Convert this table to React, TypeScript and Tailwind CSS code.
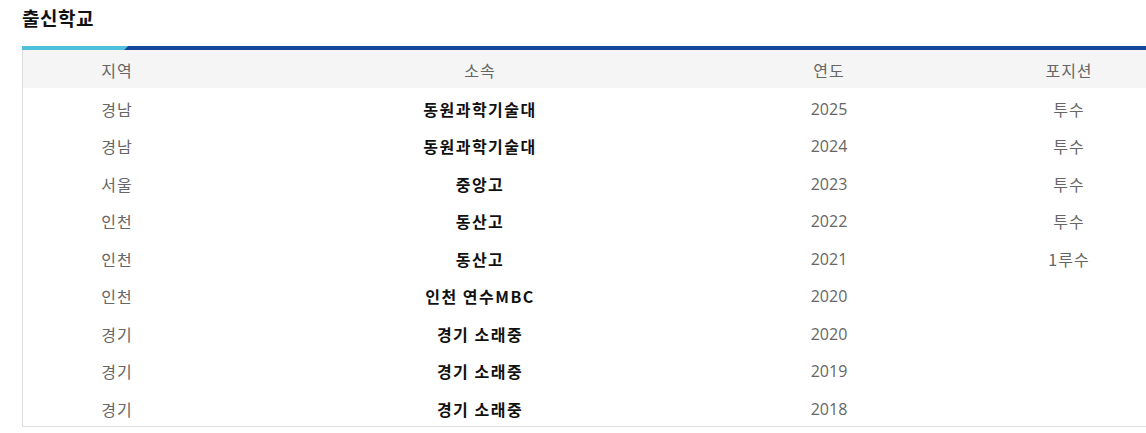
const rows = [
  { region: '경남', team: '동원과학기술대', year: '2025', pos: '투수' },
  { region: '경남', team: '동원과학기술대', year: '2024', pos: '투수' },
  { region: '서울', team: '중앙고', year: '2023', pos: '투수' },
  { region: '인천', team: '동산고', year: '2022', pos: '투수' },
  { region: '인천', team: '동산고', year: '2021', pos: '1루수' },
  { region: '인천', team: '인천 연수MBC', year: '2020', pos: '' },
  { region: '경기', team: '경기 소래중', year: '2020', pos: '' },
  { region: '경기', team: '경기 소래중', year: '2019', pos: '' },
  { region: '경기', team: '경기 소래중', year: '2018', pos: '' },
];

const cols = 'grid grid-cols-[188px_538px_160px_320px] items-center text-center';

export default function App() {
  return (
    <div className="w-[1146px] h-[433px] overflow-hidden bg-white font-['Noto_Sans_CJK_KR','Noto_Sans',sans-serif]">
      <div className="w-[1206px] pl-[22px] pt-[4px]">
        <h2 className="text-[19px] font-bold leading-[28px] text-[#111] tracking-[0.5px]">출신학교</h2>

        <div className="mt-[14px] flex h-[4px]">
          <div className="w-[100px] bg-[#4ec0dc]" />
          <svg width="6" height="4" viewBox="0 0 6 4" className="block shrink-0">
            <polygon points="0,0 6,0 2,4 0,4" fill="#4ec0dc" />
            <polygon points="6,0 6,4 2,4" fill="#12479a" />
          </svg>
          <div className="flex-1 bg-[#12479a]" />
        </div>

        <div className="border-l border-b border-[#dddddd]">
          <div className={`${cols} h-[38px] pt-[2px] bg-[#f5f5f5] text-[16px] text-[#666] tracking-[1px]`}>
            <div>지역</div>
            <div>소속</div>
            <div>연도</div>
            <div>포지션</div>
          </div>
          {rows.map((r, i) => (
            <div key={i} className={`${cols} h-[37.5px] pt-[4px] text-[16px]`}>
              <div className="text-[#666] tracking-[1px]">{r.region}</div>
              <div className="font-bold text-[#111] tracking-[1.5px]">{r.team}</div>
              <div className="text-[#666] font-['Open_Sans','Noto_Sans',sans-serif]">{r.year}</div>
              <div className="text-[#666] tracking-[1px]">{r.pos}</div>
            </div>
          ))}
        </div>
      </div>
    </div>
  );
}
